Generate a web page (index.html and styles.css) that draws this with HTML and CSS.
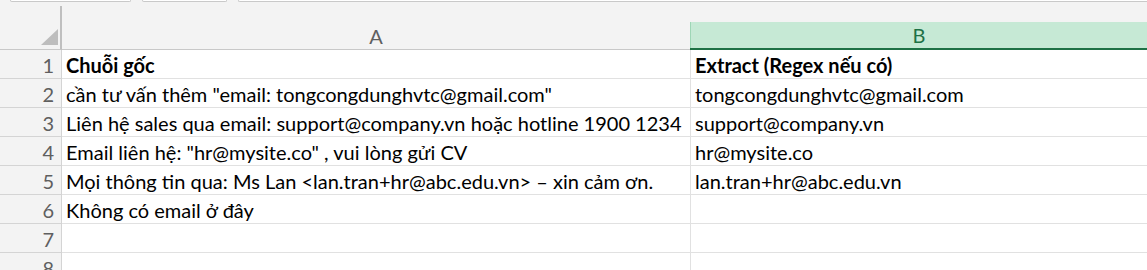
FILE: index.html
```html
<!DOCTYPE html>
<html lang="vi">
<head>
<meta charset="utf-8">
<title>Sheet</title>
<link rel="stylesheet" href="styles.css">
</head>
<body>
<div class="tabs">
  <div class="tab t1"></div>
  <div class="tab t2"></div>
  <div class="tab t3"></div>
</div>
<div class="sheet">
  <div class="corner">
    <svg class="tri" width="17" height="16" viewBox="0 0 17 16"><polygon points="17,0 17,16 0,16" fill="#bdbdbd"/></svg>
  </div>
  <div class="colhead ch-a"><div class="ch-inner">A</div></div>
  <div class="colhead ch-b"><div class="ch-inner">B</div></div>

  <div class="rh">1</div><div class="c a b1">Chuỗi gốc</div><div class="c bcol b1">Extract (Regex nếu có)</div>
  <div class="rh">2</div><div class="c a">cần tư vấn thêm "email: tongcongdunghvtc@gmail.com"</div><div class="c bcol">tongcongdunghvtc@gmail.com</div>
  <div class="rh">3</div><div class="c a">Liên hệ sales qua email: support@company.vn hoặc hotline 1900 1234</div><div class="c bcol">support@company.vn</div>
  <div class="rh">4</div><div class="c a">Email liên hệ: "hr@mysite.co" , vui lòng gửi CV</div><div class="c bcol">hr@mysite.co</div>
  <div class="rh">5</div><div class="c a">Mọi thông tin qua: Ms Lan &lt;lan.tran+hr@abc.edu.vn&gt; – xin cảm ơn.</div><div class="c bcol">lan.tran+hr@abc.edu.vn</div>
  <div class="rh">6</div><div class="c a">Không có email ở đây</div><div class="c bcol"></div>
  <div class="rh">7</div><div class="c a"></div><div class="c bcol"></div>
  <div class="rh">8</div><div class="c a"></div><div class="c bcol"></div>
</div>
</body>
</html>
```

FILE: styles.css
```css
html, body {
  margin: 0;
  padding: 0;
  background: #ffffff;
  overflow: hidden;
}
body {
  font-family: Lato, "Liberation Sans", sans-serif;
  width: 1147px;
  height: 270px;
}
.tabs {
  height: 6px;
  background: #f3f3f3;
  display: flex;
  align-items: flex-start;
  padding-left: 10px;
  gap: 11px;
}
.tab {
  height: 1px;
  background: #ffffff;
  border: 1px solid #c9c9c9;
  border-top: 0;
  border-radius: 0 0 4px 4px;
}
.t1 { width: 119px; }
.t2 { width: 83px; }
.t3 { flex: 1; border-right: 0; border-radius: 0 0 0 4px; }

.sheet {
  display: grid;
  grid-template-columns: 62px 629px 1fr;
  grid-auto-rows: 29px;
  grid-template-rows: 44px;
}
.corner {
  box-sizing: border-box;
  background: #f3f3f3;
  border-right: 2px solid #bfbfbf;
  border-bottom: 1px solid #c8c8c8;
  display: flex;
  justify-content: flex-end;
  align-items: flex-end;
  padding: 0 2px 4px 0;
}
.tri { display: block; }
.colhead {
  box-sizing: border-box;
  background: #f3f3f3;
  display: flex;
  align-items: flex-end;
  font-size: 20px;
}
.ch-a {
  border-bottom: 1px solid #c8c8c8;
  border-right: 1px solid #d6d6d6;
  color: #5f5f5f;
}
.ch-a .ch-inner { border-left: 0; }
.ch-b {
  border-bottom: 2px solid #1e7145;
  color: #1e7145;
  margin-left: -1px;
}
.ch-inner {
  flex: 1;
  height: 26px;
  text-align: center;
  line-height: 26px;
}
.ch-b .ch-inner {
  background: #c6e9d5;
  border-left: 1px solid #9ed6b6;
}
.rh {
  box-sizing: border-box;
  background: #f3f3f3;
  border-right: 1px solid #d4d4d4;
  border-bottom: 1px solid #d4d4d4;
  color: #5f5f5f;
  font-size: 20px;
  text-align: right;
  padding-right: 7px;
  line-height: 30px;
}
.c {
  box-sizing: border-box;
  border-bottom: 1px solid #e1e1e1;
  font-size: 20px;
  color: #000;
  padding-left: 4px;
  line-height: 30px;
  white-space: nowrap;
  overflow: hidden;
}
.a { border-right: 1px solid #e1e1e1; }
.b1 { font-weight: bold; }
```
